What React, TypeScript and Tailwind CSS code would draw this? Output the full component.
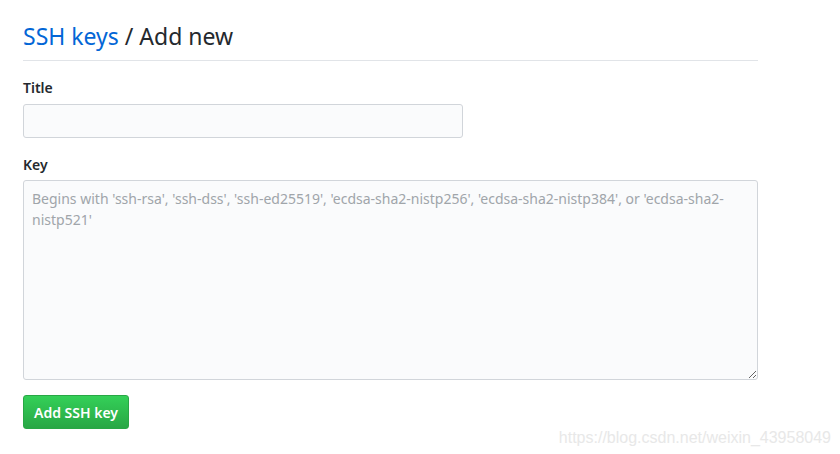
export default function App() {
  return (
    <div className="relative w-[840px] h-[454px] bg-white overflow-hidden" style={{ fontFamily: '"Segoe UI", "Noto Sans", "Liberation Sans", sans-serif' }}>
      <div className="pl-[23px] pt-[20px] w-[758px]">
        <div className="border-b border-[#e1e4e8] pb-[8px]">
          <h2 className="text-[23px] leading-[32px] font-normal text-[#24292e]">
            <span className="text-[#0366d6]">SSH keys</span> / Add new
          </h2>
        </div>
        <div className="mt-[18px]">
          <label className="block text-[14px] leading-[18px] font-semibold text-[#24292e]">Title</label>
          <input className="mt-[7px] block w-[440px] h-[34px] bg-[#fafbfc] border border-[#d1d5da] rounded-[3px] outline-none" />
        </div>
        <div className="mt-[18px]">
          <label className="block text-[14px] leading-[18px] font-semibold text-[#24292e]">Key</label>
          <textarea
            className="mt-[6px] block w-[735px] h-[200px] bg-[#fafbfc] border border-[#d1d5da] rounded-[3px] outline-none px-[8px] py-[7px] text-[14px] leading-[21px] placeholder:text-[#a0a5aa] resize-y"
            placeholder="Begins with 'ssh-rsa', 'ssh-dss', 'ssh-ed25519', 'ecdsa-sha2-nistp256', 'ecdsa-sha2-nistp384', or 'ecdsa-sha2-nistp521'"
          />
        </div>
        <button className="mt-[15px] h-[34px] px-[10px] rounded-[3px] border border-[#28a745] bg-gradient-to-b from-[#34d058] to-[#28a745] text-white text-[14px] font-semibold">
          Add SSH key
        </button>
      </div>
      <div className="absolute right-[9px] top-[426px] text-[16px] text-[#e8e8e8]" style={{ fontFamily: 'Arial, "Liberation Sans", sans-serif' }}>
        https://blog.csdn.net/weixin_43958049
      </div>
    </div>
  );
}
